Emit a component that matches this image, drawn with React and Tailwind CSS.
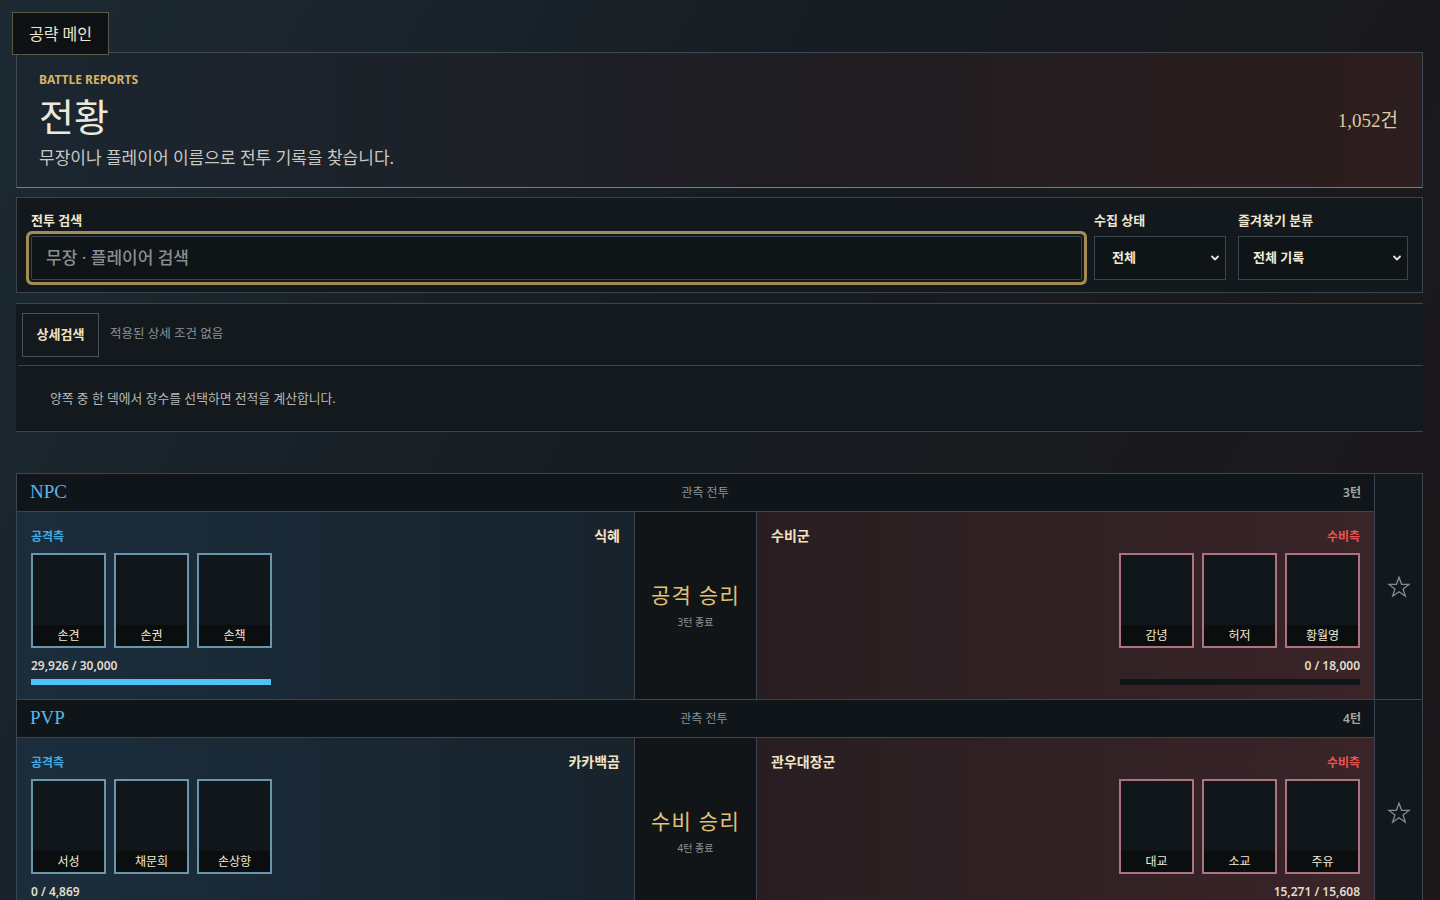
import React from 'react';

const battles = [
  {
    type: 'NPC',
    turns: '3턴',
    attacker: '식혜',
    attackHeroes: ['손견', '손권', '손책'],
    attackHp: '29,926 / 30,000',
    attackPct: 100,
    defender: '수비군',
    defendHeroes: ['감녕', '허저', '황월영'],
    defendHp: '0 / 18,000',
    defendPct: 0,
    result: '공격 승리',
    resultSub: '3턴 종료',
  },
  {
    type: 'PVP',
    turns: '4턴',
    attacker: '카카백곰',
    attackHeroes: ['서성', '채문희', '손상향'],
    attackHp: '0 / 4,869',
    attackPct: 0,
    defender: '관우대장군',
    defendHeroes: ['대교', '소교', '주유'],
    defendHp: '15,271 / 15,608',
    defendPct: 98,
    result: '수비 승리',
    resultSub: '4턴 종료',
  },
];

const HeroCard = ({ name, side }) => (
  <div
    className={`w-[75px] h-[95px] flex flex-col justify-end bg-[#11161a] border-2 ${
      side === 'attack' ? 'border-[#6a95ab]' : 'border-[#ad7380]'
    }`}
  >
    <div className="h-[21px] bg-[#0b0e0f] flex items-center justify-center text-[12px] text-[#f0ead8]">{name}</div>
  </div>
);

const Chevron = () => (
  <svg width="10" height="10" viewBox="0 0 10 10" fill="none">
    <path d="M2 3.5 L5 6.5 L8 3.5" stroke="#e8e4d8" strokeWidth="1.8" strokeLinecap="round" strokeLinejoin="round" />
  </svg>
);

const Star = () => (
  <svg width="24" height="24" viewBox="0 0 24 24" fill="none">
    <path
      d="M12 2.2 L14.6 9.3 L22 9.4 L16.1 13.9 L18.3 21.2 L12 16.8 L5.7 21.2 L7.9 13.9 L2 9.4 L9.4 9.3 Z"
      stroke="#7f8c99"
      strokeWidth="1.3"
      strokeLinejoin="miter"
    />
  </svg>
);

const BattleCard = ({ b }) => (
  <div className="flex border-b border-[#3a4550] last:border-b-0">
    <div className="flex-1 flex flex-col">
      {/* header */}
      <div className="h-[38px] bg-[#101519] border-b border-[#3a4550] flex items-center justify-between pl-[13px] pr-[13px]">
        <span className="text-[19px] text-[#5ab6e6] font-['Liberation_Serif',serif]">{b.type}</span>
        <span className="text-[12px] text-[#8a949c]">관측 전투</span>
        <span className="text-[12px] font-semibold text-[#a8a79c]">{b.turns}</span>
      </div>
      {/* body */}
      <div className="grid grid-cols-[1fr_123px_1fr] h-[187px]">
        <div className="bg-[linear-gradient(90deg,#1b2d3c,#18232c)] px-[14px] pt-[17px]">
          <div className="flex justify-between items-center h-4">
            <span className="text-[12px] font-bold text-[#45ace0]">공격측</span>
            <span className="-mt-1 text-[14px] font-bold text-[#f3e3c3]">{b.attacker}</span>
          </div>
          <div className="flex gap-2 mt-[8px]">
            {b.attackHeroes.map((h) => (
              <HeroCard key={h} name={h} side="attack" />
            ))}
          </div>
          <div className="mt-[10px] text-[12px] font-semibold text-[#e2dccb] leading-4">{b.attackHp}</div>
          <div className="mt-[5px] w-[240px] h-[6px] bg-[#111518]">
            <div className="h-full bg-[#4fc3f7]" style={{ width: `${b.attackPct}%` }} />
          </div>
        </div>
        <div className="bg-[#111518] border-x border-[#3a4550] flex flex-col items-center justify-center">
          <span className="text-[21px] text-[#e2c276] tracking-[0.06em] leading-7">{b.result}</span>
          <span className="text-[10px] text-[#8d949a] mt-[6px]">{b.resultSub}</span>
        </div>
        <div className="bg-[linear-gradient(90deg,#281e21,#3a2428)] px-[14px] pt-[17px] flex flex-col items-end">
          <div className="flex justify-between items-center h-4 w-full">
            <span className="-mt-1 text-[14px] font-bold text-[#f3e3c3]">{b.defender}</span>
            <span className="text-[12px] font-bold text-[#ef5350]">수비측</span>
          </div>
          <div className="flex gap-2 mt-[8px]">
            {b.defendHeroes.map((h) => (
              <HeroCard key={h} name={h} side="defend" />
            ))}
          </div>
          <div className="mt-[10px] text-[12px] font-semibold text-[#e2dccb] leading-4">{b.defendHp}</div>
          <div className="mt-[5px] w-[240px] h-[6px] bg-[#111518] flex justify-end">
            <div className="h-full bg-[#ef5350]" style={{ width: `${b.defendPct}%` }} />
          </div>
        </div>
      </div>
    </div>
    <div className="w-[48px] bg-[#12181c] border-l border-[#3a4550] flex items-center justify-center">
      <Star />
    </div>
  </div>
);

const App = () => {
  return (
    <div className="min-h-screen bg-[linear-gradient(120deg,#1d2a33_0%,#161c21_45%,#1d1719_100%)] font-['Noto_Sans','Noto_Sans_CJK_KR',sans-serif] text-[#e8e4d8] pt-3 pl-4 pr-[17px] pb-10">
      {/* Tab */}
      <div className="relative z-10 -ml-1 -mb-[3px] w-[97px] h-[43px] flex items-center justify-center bg-[#0f1214] border border-[#5a5947] text-[16px] text-[#efe6cf]">
        공략 메인
      </div>

      {/* Hero */}
      <div className="border border-[#3f4a54] border-b-[#8d7f4c] bg-[linear-gradient(90deg,#1b2630_0%,#1f1d22_55%,#2d1d1e_100%)] px-[22px] pt-[19px] pb-[17px] flex items-center justify-between">
        <div>
          <div className="text-[12px] font-bold text-[#d6b263] leading-4">BATTLE REPORTS</div>
          <div className="mt-[7px] text-[38px] leading-[46px] text-[#ece8dc] font-['Liberation_Serif','Noto_Sans_CJK_KR',serif]">전황</div>
          <div className="mt-[5px] text-[17px] leading-6 text-[#c9c8c0]">무장이나 플레이어 이름으로 전투 기록을 찾습니다.</div>
        </div>
        <div className="text-[19px] text-[#dccaa0] mr-[2px] font-['Liberation_Serif','Noto_Sans_CJK_KR',serif]">1,052건</div>
      </div>

      {/* Search */}
      <div className="mt-[9px] border border-[#3a4550] bg-[#13181c] px-[14px] pt-[14px] pb-[12px] flex gap-3">
        <div className="flex-1 flex flex-col">
          <label className="text-[13px] font-bold text-[#efe6cf] leading-4">전투 검색</label>
          <div className="mt-2 h-[44px] border border-[#3a4550] bg-[#0f1417] rounded-[2px] ring-[3px] ring-[#a38b55] ring-offset-2 ring-offset-[#13181c] flex items-center px-[14px]">
            <span className="text-[17px] font-medium text-[#8a8d8f]">무장 · 플레이어 검색</span>
          </div>
        </div>
        <div className="w-[132px] flex flex-col">
          <label className="text-[13px] font-bold text-[#efe6cf] leading-4">수집 상태</label>
          <div className="mt-2 h-[44px] border border-[#3a4550] bg-[#0f1417] flex items-center justify-between pl-[17px] pr-[5px]">
            <span className="text-[13px] font-bold text-[#f0ead8]">전체</span>
            <Chevron />
          </div>
        </div>
        <div className="w-[170px] flex flex-col">
          <label className="text-[13px] font-bold text-[#efe6cf] leading-4">즐겨찾기 분류</label>
          <div className="mt-2 h-[44px] border border-[#3a4550] bg-[#0f1417] flex items-center justify-between pl-[14px] pr-[5px]">
            <span className="text-[13px] font-bold text-[#f0ead8]">전체 기록</span>
            <Chevron />
          </div>
        </div>
      </div>

      {/* Advanced */}
      <div className="mt-[10px] border-t border-b border-[#3a4550] bg-[#14191d]">
        <div className="h-[61px] flex items-center pl-[6px] gap-[11px]">
          <button className="w-[77px] h-[44px] border border-[#4a535c] text-[13px] font-bold text-[#f3e3c3]">상세검색</button>
          <span className="text-[12.5px] text-[#8d9297]">적용된 상세 조건 없음</span>
        </div>
        <div className="ml-[2px] border-t border-[#3a4550] h-[66px] flex items-center pl-[32px]">
          <span className="text-[12.8px] text-[#b6b8b8]">양쪽 중 한 덱에서 장수를 선택하면 전적을 계산합니다.</span>
        </div>
      </div>

      {/* Battles */}
      <div className="mt-[41px] border border-[#3a4550]">
        {battles.map((b) => (
          <BattleCard key={b.type} b={b} />
        ))}
      </div>
    </div>
  );
};

export default App;
